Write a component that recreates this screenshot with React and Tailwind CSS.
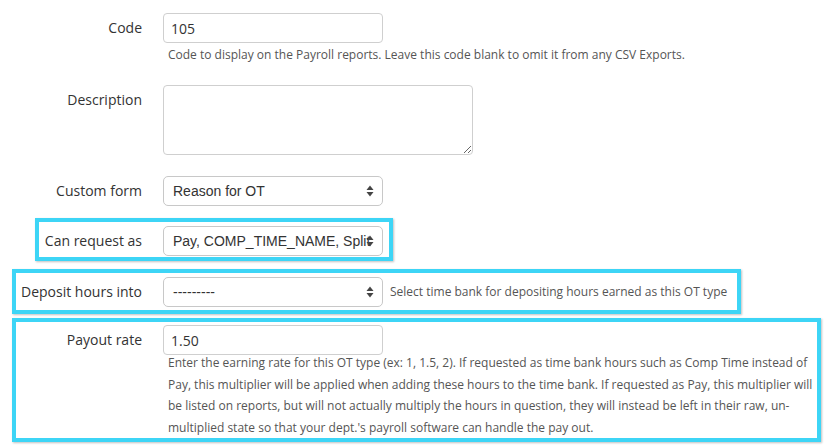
import React from 'react'

const sans = { fontFamily: "'Open Sans','Noto Sans',sans-serif" }

const Arrows = () => (
  <svg width="8" height="13" viewBox="0 0 8 13" className="absolute right-[8px] top-1/2 -translate-y-1/2 pointer-events-none">
    <path d="M4 1 L7.5 5.5 L0.5 5.5 Z" fill="#444" />
    <path d="M4 12 L7.5 7.5 L0.5 7.5 Z" fill="#444" />
  </svg>
)

const Select = ({ value }) => (
  <div className="relative w-[220px] h-[30px] border border-[#c8c8c8] rounded-[5px] bg-white">
    <div
      className="h-full pl-[9px] pr-[13px] leading-[28px] text-[14px] text-[#333] whitespace-nowrap overflow-hidden"
      style={{ fontFamily: "'Liberation Sans',Arial,sans-serif" }}
    >
      {value}
    </div>
    <Arrows />
  </div>
)

const Input = ({ value }) => (
  <input
    type="text"
    readOnly
    value={value}
    className="w-[220px] h-[30px] border border-[#cfcfcf] rounded-[4px] px-[7px] text-[14px] text-[#333] bg-white focus:outline-none"
    style={sans}
  />
)

const Label = ({ w, children }) => (
  <div className={`${w} shrink-0 text-right text-[14px] leading-[30px] text-[#333]`}>{children}</div>
)

const box = 'border-4 border-[#3dd5f6] shadow-[1px_1px_2px_rgba(0,0,0,0.25)] flex'

export default function App() {
  return (
    <div className="w-[833px] h-[448px] bg-white overflow-hidden pt-[13px]" style={sans}>
      <div className="flex">
        <Label w="w-[142px]">Code</Label>
        <div className="ml-[21px]">
          <Input value="105" />
          <div className="pl-[5px] mt-[2px] text-[12px] leading-[20px] text-[#555]">
            Code to display on the Payroll reports. Leave this code blank to omit it from any CSV Exports.
          </div>
        </div>
      </div>

      <div className="flex mt-[20px]">
        <Label w="w-[142px]">Description</Label>
        <textarea
          readOnly
          className="ml-[21px] w-[310px] h-[70px] border border-[#cfcfcf] rounded-[4px] bg-white focus:outline-none"
        />
      </div>

      <div className="flex mt-[21px]">
        <Label w="w-[142px]">Custom form</Label>
        <div className="ml-[21px]">
          <Select value="Reason for OT" />
        </div>
      </div>

      <div className={`${box} ml-[35px] w-[358px] mt-[12px] pt-[4px] pb-[1px]`}>
        <Label w="w-[103px]">Can request as</Label>
        <div className="ml-[21px]">
          <Select value="Pay, COMP_TIME_NAME, Split" />
        </div>
      </div>

      <div className={`${box} ml-[12px] w-[729px] mt-[8px] pt-[4px] pb-[3px] items-center`}>
        <Label w="w-[126px]">Deposit hours into</Label>
        <div className="ml-[21px]">
          <Select value="---------" />
        </div>
        <div className="ml-[7px] text-[12px] text-[#555] whitespace-nowrap">
          Select time bank for depositing hours earned as this OT type
        </div>
      </div>

      <div className={`${box} ml-[12px] w-[809px] mt-[4px] pt-[3px] pb-0`}>
        <Label w="w-[126px]">Payout rate</Label>
        <div className="ml-[21px] flex-1">
          <Input value="1.50" />
          <div className="pl-[5px] pr-[2px] -mt-[3px] text-[12px] leading-[21.5px] text-[#555]">
            Enter the earning rate for this OT type (ex: 1, 1.5, 2). If requested as time bank hours such as Comp Time instead of Pay, this multiplier will be applied when adding these hours to the time bank. If requested as Pay, this multiplier will be listed on reports, but will not actually multiply the hours in question, they will instead be left in their raw, un-multiplied state so that your dept.'s payroll software can handle the pay out.
          </div>
        </div>
      </div>
    </div>
  )
}
